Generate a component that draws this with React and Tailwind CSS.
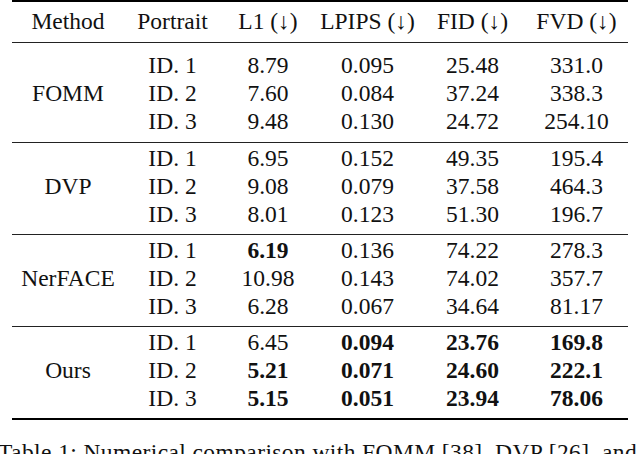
import React from 'react'

const groups = [
  {
    method: 'FOMM',
    rows: [
      ['ID. 1', '8.79', '0.095', '25.48', '331.0'],
      ['ID. 2', '7.60', '0.084', '37.24', '338.3'],
      ['ID. 3', '9.48', '0.130', '24.72', '254.10'],
    ],
  },
  {
    method: 'DVP',
    rows: [
      ['ID. 1', '6.95', '0.152', '49.35', '195.4'],
      ['ID. 2', '9.08', '0.079', '37.58', '464.3'],
      ['ID. 3', '8.01', '0.123', '51.30', '196.7'],
    ],
  },
  {
    method: 'NerFACE',
    rows: [
      ['ID. 1', '*6.19', '0.136', '74.22', '278.3'],
      ['ID. 2', '10.98', '0.143', '74.02', '357.7'],
      ['ID. 3', '6.28', '0.067', '34.64', '81.17'],
    ],
  },
  {
    method: 'Ours',
    rows: [
      ['ID. 1', '6.45', '*0.094', '*23.76', '*169.8'],
      ['ID. 2', '*5.21', '*0.071', '*24.60', '*222.1'],
      ['ID. 3', '*5.15', '*0.051', '*23.94', '*78.06'],
    ],
  },
]

const cols = 'grid grid-cols-[112px_97px_94px_105px_105px_103px]'

// a leading * marks the best value (bold)
function Cell({ value }) {
  const bold = value.startsWith('*')
  return (
    <div className={`h-[28px] flex items-center justify-center leading-none ${bold ? 'font-bold' : ''}`}>
      {bold ? value.slice(1) : value}
    </div>
  )
}

export default function App() {
  return (
    <div className="w-[640px] h-[454px] overflow-hidden bg-white text-[#111] text-[23.5px] font-['Liberation_Serif',serif]">
      <div className="ml-[12px] w-[616px]">
        {/* Header */}
        <div className={`${cols} h-[43px] border-t-2 border-b border-t-black border-b-[#222] items-center leading-none`}>
          <div className="text-center">Method</div>
          <div className="text-center">Portrait</div>
          <div className="text-center">L1 (↓)</div>
          <div className="text-center">LPIPS (↓)</div>
          <div className="text-center">FID (↓)</div>
          <div className="text-center">FVD (↓)</div>
        </div>

        {groups.map((g, gi) => {
          const last = gi === groups.length - 1
          return (
            <div
              key={g.method}
              className={`${cols} ${gi === 0 ? 'pt-[9px] pb-[6px]' : 'pt-[2px] pb-[5px]'} ${last ? 'border-b-2 border-black' : 'border-b border-[#222]'}`}
            >
              <div className="row-span-3 flex items-center justify-center leading-none">{g.method}</div>
              {g.rows.map((r) => r.map((v, i) => <Cell key={r[0] + i} value={v} />))}
            </div>
          )
        })}
      </div>

      {/* Caption */}
      <div className="mt-[21px] -ml-[2px] whitespace-nowrap leading-none tracking-[0.4px]">
        Table 1: Numerical comparison with FOMM [38], DVP [26], and
      </div>
    </div>
  )
}
